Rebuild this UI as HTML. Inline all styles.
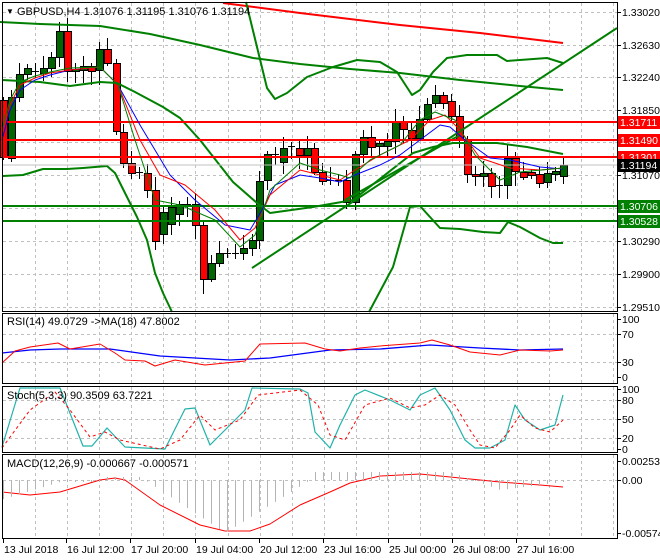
<!DOCTYPE html>
<html><head><meta charset="utf-8"><style>
html,body{margin:0;padding:0;background:#fff;}
svg{display:block;font-family:"Liberation Sans",sans-serif;font-size:11px;}
</style></head><body>
<svg id="s" width="660" height="560" viewBox="0 0 660 560" xmlns="http://www.w3.org/2000/svg">
<rect width="660" height="560" fill="#fff"/>
<g id="grid" stroke="#c0c0c0" stroke-dasharray="3,3" stroke-width="1"></g>
<g id="cd"></g>
<g fill="none" stroke-linejoin="round">
<polyline stroke="#f00" stroke-width="2" points="223,3 300,13 400,25 480,33 563,43"/>
<polyline stroke="#008000" stroke-width="2" points="0,22 40,24 100,26 150,34 200,45 253,58 300,64 350,69 400,73 460,80 520,86 563,90"/>
<polyline stroke="#008000" stroke-width="2" points="246,2 267,88 275,99 287,93 307,77 333,67 357,60 380,62 397,72 412,95 420,90 433,72 447,58 467,55 497,55 507,61 547,58 563,63"/>
<polyline stroke="#008000" stroke-width="2" points="2,80 40,82 70,86 100,82 117,83 135,92 163,107 180,118 200,140 233,182 257,203 270,213 313,207 353,200 413,153 433,147 453,143 497,143 527,147 563,154"/>
<polyline stroke="#008000" stroke-width="2" points="3,176 23,175 43,169 67,169 83,168 107,166 115,173 127,197 137,217 147,240 155,273 163,293 172,312"/>
<polyline stroke="#008000" stroke-width="2" points="369,312 393,267 410,207 420,206 440,228 460,229 483,232 500,233 508,222 520,227 540,238 553,243 563,243"/>
<line x1="252" y1="268" x2="617" y2="28" stroke="#008000" stroke-width="2"/>
<line x1="345" y1="200" x2="460" y2="135" stroke="#008000" stroke-width="2"/>
<line x1="2" y1="122" x2="617" y2="122" stroke="#f00" stroke-width="2"/>
<line x1="2" y1="140" x2="617" y2="140" stroke="#f00" stroke-width="2"/>
<line x1="2" y1="157" x2="617" y2="157" stroke="#f00" stroke-width="2"/>
<line x1="2" y1="165" x2="617" y2="165" stroke="#c0c0c0" stroke-width="1"/>
<line x1="2" y1="206" x2="617" y2="206" stroke="#008000" stroke-width="2"/>
<line x1="2" y1="221" x2="617" y2="221" stroke="#008000" stroke-width="2"/>
<polyline stroke="#00f" stroke-width="1" points="2,140 10,110 20,90 35,80 50,75 70,70 100,67 118,85 140,125 170,175 195,200 225,225 250,230 262,210 275,185 300,175 320,178 340,182 355,175 380,165 400,155 420,140 440,125 450,127 465,140 490,158 510,160 540,167 563,169"/>
<polyline stroke="#f00" stroke-width="1" points="2,135 10,105 20,85 35,78 50,73 70,70 100,67 118,85 140,140 160,175 185,185 215,210 240,240 255,228 270,195 300,170 320,175 340,180 355,170 380,155 410,140 430,120 445,115 460,130 480,158 510,168 540,170 563,168"/>
<polyline stroke="#008000" stroke-width="1" points="2,130 10,100 20,82 35,76 50,72 70,68 100,67 118,85 135,140 155,200 180,205 215,220 240,247 255,235 270,190 300,163 320,170 340,175 350,178 370,160 400,145 420,120 435,112 455,120 475,155 500,180 520,172 563,168"/>
<polyline stroke="#00f" stroke-width="1.3" points="2,353 30,350 60,349 110,349 160,356 230,360 270,358 300,354 330,350 380,349 430,345 480,348 520,350 563,349"/>
<polyline stroke="#f00" stroke-width="1" points="2,363 15,351 30,347 58,343 70,349 100,344 115,353 125,360 145,361 155,366 175,360 205,365 245,361 260,344 305,343 325,349 340,351 360,348 380,346 420,343 432,340 450,345 470,352 500,355 520,350 550,351 563,350"/>
<polyline stroke="#20b2aa" stroke-width="1.2" points="2,447 20,388 60,388 83,446 92,446 107,428 125,447 165,449 185,409 195,408 210,445 245,410 252,388 300,389 308,393 315,432 330,448 340,425 355,395 365,390 390,400 410,410 420,395 435,388 450,410 465,440 475,448 490,448 505,440 515,405 525,420 540,430 555,425 563,395"/>
<polyline stroke="#f00" stroke-width="1" stroke-dasharray="3,3" points="2,448 30,410 55,392 70,410 90,437 105,432 120,440 160,449 180,440 200,415 215,430 240,420 258,395 300,390 318,405 330,435 345,440 365,405 390,398 410,408 425,405 440,395 455,405 470,430 480,445 495,448 510,430 520,415 535,428 550,432 563,420"/>
<polyline stroke="#f00" stroke-width="1" points="2,492 30,495 60,492 100,480 115,478 125,480 160,505 200,525 225,531 250,531 270,524 300,505 330,492 350,483 380,476 420,474 460,478 500,482 540,485 563,487"/>
</g>
<g id="hist" stroke="#b4b4b4" stroke-width="1"></g>
<g fill="none" stroke="#000" stroke-width="1">
<rect x="2.5" y="2.5" width="615" height="309"/>
<rect x="2.5" y="313.5" width="615" height="70"/>
<rect x="2.5" y="386.5" width="615" height="66"/>
<rect x="2.5" y="454.5" width="615" height="84"/>
</g>
<g id="ax" fill="#000" font-size="10.5"></g>
<text x="6" y="14" font-size="8">▼</text>
<text x="17" y="15">GBPUSD,H4  1.31076 1.31195 1.31076 1.31194</text>
<text x="7" y="325">RSI(14) 49.0729  -&gt;MA(18) 47.8002</text>
<text x="7" y="399">Stoch(5,3,3) 90.3509 63.7221</text>
<text x="7" y="467">MACD(12,26,9) -0.000667 -0.000571</text>
</svg>
<script>
var NS="http://www.w3.org/2000/svg";
function el(p,t,a,txt){var e=document.createElementNS(NS,t);for(var k in a)e.setAttribute(k,a[k]);if(txt!==undefined)e.textContent=txt;p.appendChild(e);return e;}
var g=document.getElementById('grid');
for(var x=35;x<617;x+=32.1){var xx=Math.round(x)+.5;
 [[3,311],[314,383],[387,452],[455,538]].forEach(function(r){el(g,'line',{x1:xx,y1:r[0],x2:xx,y2:r[1]});});}
[12,45,77,110,142,175,208,241,274,307].forEach(function(y){el(g,'line',{x1:3,y1:y+.5,x2:617,y2:y+.5});});
[334,362].forEach(function(y){el(g,'line',{x1:3,y1:y+.5,x2:617,y2:y+.5});});
[400,419,438].forEach(function(y){el(g,'line',{x1:3,y1:y+.5,x2:617,y2:y+.5});});
el(g,'line',{x1:3,y1:480.5,x2:617,y2:480.5});
var C=[[3,100,157],[11,158,97],[19,97,74],[27,74,68],[35,71,71],[43,73,68],[51,68,57],[59,57,31],[67,31,71],[75,71,69],[83,70,66],[91,66,71],[99,70,49],[107,49,63],[116,63,131],[123,132,163],[131,163,173],[139,172,172],[147,173,190],[155,190,241],[163,234,212],[171,224,207],[179,214,204],[187,204,204],[195,204,225],[203,225,279],[211,279,263],[219,263,253],[227,253,253],[235,253,253],[243,253,248],[252,248,240],[259,240,181],[267,180,154],[275,154,154],[283,162,148],[291,146,146],[299,148,155],[307,155,148],[314,148,172],[322,172,181],[330,180,180],[338,180,180],[346,180,202],[355,202,154],[363,154,137],[371,137,147],[379,146,143],[387,146,141],[395,141,121],[403,121,129],[411,130,138],[419,138,119],[427,119,104],[435,103,95],[443,95,103],[451,101,116],[459,116,140],[467,140,174],[475,174,176],[483,176,173],[491,173,186],[499,185,185],[507,185,158],[515,158,171],[523,172,177],[531,172,175],[539,174,183],[547,182,173],[555,174,171],[563,176,165]];
var cg=document.getElementById('cd');
C.forEach(function(c,i){var x=c[0],o=c[1],cl=c[2];var t=Math.min(o,cl),b=Math.max(o,cl);
 var w=((i*37)%11)+3,w2=((i*53)%13)+3;
 el(cg,'line',{x1:x+.5,y1:t-w,x2:x+.5,y2:b+w2,stroke:'#000','stroke-width':1});
 if(b-t<1.5){el(cg,'line',{x1:x-3,y1:t+.5,x2:x+4,y2:t+.5,stroke:'#000','stroke-width':1});}
 else el(cg,'rect',{x:x-3+.5,y:t+.5,width:7,height:b-t,fill:cl<o?'#006400':'#ff0000',stroke:'#000','stroke-width':1});
});
var h=document.getElementById('hist');
for(var x=3,i=0;x<565;x+=8,i++){
 var v;
 if(x<60)v=500-(x/60)*18;else if(x<100)v=482;else if(x<140)v=477;else if(x<225)v=477+(x-140)/85*56;else if(x<310)v=533-(x-225)/85*53;else if(x<450)v=472;else if(x<500)v=472+(x-450)/50*18;else v=490-(x-500)/63*8;
 el(h,'line',{x1:x+.5,y1:480,x2:x+.5,y2:v});
}
var ax=document.getElementById('ax');
function lab(y,t){el(ax,'line',{x1:617,y1:y+.5,x2:621,y2:y+.5,stroke:'#000'});el(ax,'text',{x:622,y:y+4},t);}
[[12,'1.33020'],[45,'1.32630'],[77,'1.32240'],[110,'1.31850'],[175,'1.31070'],[241,'1.30290'],[274,'1.29900'],[307,'1.29510']].forEach(function(a){lab(a[0],a[1]);});
[[319,'100'],[334,'70'],[362,'30'],[377,'0'],[389,'100'],[400,'80'],[419,'50'],[438,'20'],[449,'0'],[461,'0.002534'],[480,'0.00'],[533,'-0.005745']].forEach(function(a){lab(a[0],a[1]);});
function box(y,t,col){el(ax,'rect',{x:618,y:y-6,width:42,height:13,fill:col});el(ax,'text',{x:620,y:y+4,fill:'#fff'},t);}
box(122,'1.31711','#f00');box(140,'1.31490','#f00');box(157,'1.31301','#f00');box(165,'1.31194','#000');box(206,'1.30706','#008000');box(221,'1.30528','#008000');
[[3,'13 Jul 2018'],[66,'16 Jul 12:00'],[130,'17 Jul 20:00'],[195,'19 Jul 04:00'],[259,'20 Jul 12:00'],[323,'23 Jul 16:00'],[388,'25 Jul 00:00'],[452,'26 Jul 08:00'],[516,'27 Jul 16:00']].forEach(function(a){
 el(ax,'line',{x1:a[0]+.5,y1:539,x2:a[0]+.5,y2:543,stroke:'#000'});el(ax,'text',{x:a[0]+1,y:553},a[1]);});
</script>
</body></html>
